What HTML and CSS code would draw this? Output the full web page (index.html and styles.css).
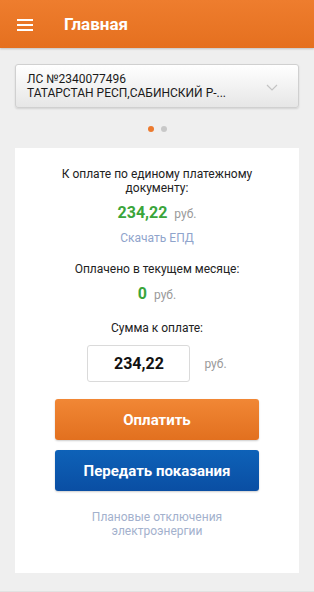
FILE: index.html
```html
<!DOCTYPE html>
<html lang="ru">
<head>
  <meta charset="UTF-8" />
  <meta name="viewport" content="width=device-width, initial-scale=1.0" />
  <title>Главная</title>
  <link rel="stylesheet" href="styles.css">
</head>
<body>
  <!-- шапка -->
  <div class="topbar">
    <svg class="burger" width="16" height="12" viewBox="0 0 16 12">
      <rect x="0" y="0" width="16" height="2" fill="#fff"/>
      <rect x="0" y="5" width="16" height="2" fill="#fff"/>
      <rect x="0" y="10" width="16" height="2" fill="#fff"/>
    </svg>
    <span class="title">Главная</span>
  </div>

  <div class="main">
    <!-- выбор лицевого счета -->
    <div class="account">
      <div class="account-text">
        <div>ЛС №2340077496</div>
        <div>ТАТАРСТАН РЕСП,САБИНСКИЙ Р-...</div>
      </div>
      <svg class="chev" width="12" height="7" viewBox="0 0 12 7">
        <path d="M1 1 L6 6 L11 1" fill="none" stroke="#c4c4c4" stroke-width="1.2"/>
      </svg>
    </div>

    <div class="dots"><span class="dot on"></span><span class="dot"></span></div>

    <!-- карточка -->
    <div class="card">
      <div class="label">К оплате по единому платежному<br>документу:</div>
      <div class="amount amount-1"><b>234,22</b> <span class="rub">руб.</span></div>
      <a class="link link-epd" href="#">Скачать ЕПД</a>
      <div class="label label-2">Оплачено в текущем месяце:</div>
      <div class="amount amount-2"><b>0</b> <span class="rub">руб.</span></div>
      <div class="label label-3">Сумма к оплате:</div>
      <div class="sum-row">
        <div class="sum-input">234,22</div>
        <span class="rub">руб.</span>
      </div>
      <button class="btn btn-pay">Оплатить</button>
      <button class="btn btn-send">Передать показания</button>
      <a class="link link-off" href="#">Плановые отключения<br>электроэнергии</a>
    </div>
  </div>
</body>
</html>
```

FILE: styles.css
```css
html, body { margin:0; padding:0; }
body { background:#efefef; font-family:Roboto, 'Liberation Sans', sans-serif; color:#222; height:592px; border-bottom:1px solid #e2e2e2; box-sizing:border-box; }

/* шапка */
.topbar { height:48px; background:linear-gradient(#ee7d2e, #e5701f); display:flex; align-items:center; padding-left:17px; box-shadow:0 1px 2px rgba(0,0,0,0.2); }
.burger { display:block; margin-top:1px; }
.title { color:#fff; font-size:17px; font-weight:bold; margin-left:31px; }

.main { padding:16px 15px 0; }

/* лицевой счет */
.account { height:44px; box-sizing:border-box; border:1px solid #d0d0d0; border-radius:3px; background:linear-gradient(#ffffff, #e6e6e6); box-shadow:0 1px 2px rgba(0,0,0,0.12); display:flex; align-items:center; justify-content:space-between; padding:0 20px 0 11px; }
.account-text { font-size:12px; line-height:14px; color:#1a1a1a; }
.chev { display:block; margin-top:2px; }

.dots { display:flex; justify-content:center; gap:7px; padding:18px 0 16px; }
.dot { width:6px; height:6px; border-radius:50%; background:#c8c8c8; }
.dot.on { background:#ec7a2f; }

/* карточка */
.card { background:#fff; padding:19px 0 35px; display:flex; flex-direction:column; align-items:center; text-align:center; }
.label { font-size:12px; line-height:14px; color:#222; }
.label-2 { margin-top:17px; }
.label-3 { margin-top:16px; }
.amount { line-height:20px; margin-top:8px; }
.amount b { font-size:16px; color:#3aa53b; }
.rub { font-size:12px; color:#9a9a9a; margin-left:3px; }
.link { display:block; font-size:12px; line-height:14px; color:#8fa4cc; text-decoration:none; }
.link-epd { margin-top:7px; }
.link-off { margin-top:19px; color:#a3b1cd; }

.sum-row { display:flex; align-items:center; gap:11px; margin-top:10px; }
.sum-input { width:103px; height:37px; box-sizing:border-box; border:1px solid #dadada; border-radius:3px; display:flex; align-items:center; justify-content:center; font-size:16px; font-weight:bold; color:#111; }

.btn { display:block; width:204px; height:41px; border:none; border-radius:3px; color:#fff; font-family:inherit; font-size:15px; font-weight:bold; box-shadow:0 1px 2px rgba(0,0,0,0.2); }
.btn-pay { background:linear-gradient(#f18735, #e2701f); margin-top:17px; }
.btn-send { background:linear-gradient(#0e62b8, #0a4ea3); margin-top:10px; }
```
